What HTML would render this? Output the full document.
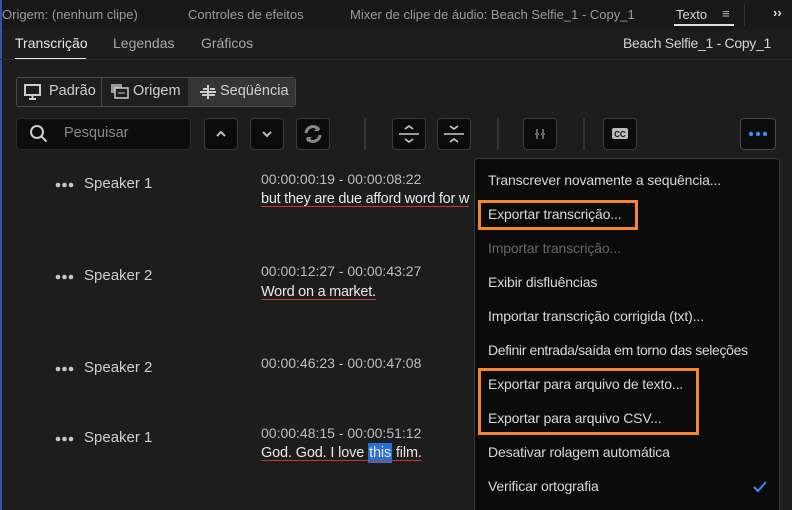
<!DOCTYPE html>
<html><head><meta charset="utf-8"><style>
*{margin:0;padding:0;box-sizing:border-box}
html,body{width:792px;height:510px;overflow:hidden}
body{background:#1d1d1d;font-family:"Liberation Sans",sans-serif;color:#ccc;position:relative}
.a{position:absolute;white-space:nowrap}
.top{left:0;top:0;width:792px;height:30px;background:#181818}
.t1{font-size:13px;color:#9a9a9a;top:7px}
.sub{font-size:14px;top:35px;color:#a8a8a8}
.btn{position:absolute;top:118px;width:34px;height:32px;background:#0c0c0c;border:1px solid #3a3a3a;border-radius:4px}
.sep{position:absolute;top:118px;width:2px;height:32px;background:#333}
.spk{font-size:15px;color:#d0d0d0}
.tc{font-size:14px;color:#bdbdbd}
.tx{font-size:14.5px;color:#e8e8e8;text-decoration:underline;text-decoration-color:#c33;text-underline-offset:3px;letter-spacing:-0.25px}
.menu{left:474px;top:158px;width:306px;height:352px;background:#0b0b0b;border:1px solid #3a3a3a;border-bottom:none;border-radius:4px 4px 0 0}
.mi{left:488px;font-size:14px;color:#d8d8d8;letter-spacing:-0.15px}
.ob{position:absolute;border:3px solid #f5862b}
</style></head><body>
<div class="a top"></div>
<div class="a" style="left:0;top:0;width:2px;height:510px;background:#2a5aa8"></div>
<div class="a t1" style="left:2px">Origem: (nenhum clipe)</div>
<div class="a t1" style="left:188px">Controles de efeitos</div>
<div class="a t1" style="left:350px">Mixer de clipe de áudio: Beach Selfie_1 - Copy_1</div>
<div class="a t1" style="left:676px;color:#d8d8d8">Texto</div>
<div class="a" style="left:674px;top:24px;width:60px;height:2px;background:#ddd"></div>
<div class="a t1" style="left:722px;top:6px;color:#bbb">≡</div>
<div class="a" style="left:744px;top:4px;width:1px;height:22px;background:#333"></div>
<div class="a t1" style="left:773px;top:5px;color:#ddd;font-weight:bold">››</div>
<div class="a sub" style="left:15px;color:#e6e6e6">Transcrição</div>
<div class="a" style="left:15px;top:58px;width:71px;height:2px;background:#e6e6e6"></div>
<div class="a sub" style="left:113px">Legendas</div>
<div class="a sub" style="left:201px">Gráficos</div>
<div class="a sub" style="left:623px;color:#d4d4d4;letter-spacing:-0.3px">Beach Selfie_1 - Copy_1</div>
<div class="a" style="left:0;top:59px;width:792px;height:1px;background:#2c2c2c"></div>
<div class="a" style="left:16px;top:77px;width:280px;height:30px;border:1px solid #4a4a4a;border-radius:3px;background:#1e1e1e"></div>
<div class="a" style="left:188px;top:78px;width:107px;height:28px;background:#353535"></div>
<div class="a" style="left:101px;top:78px;width:1px;height:28px;background:#4a4a4a"></div>
<svg class="a" style="left:24px;top:84px" width="17" height="16"><rect x="1" y="1" width="15" height="10" fill="none" stroke="#ccc" stroke-width="2"/><path d="M8.5 11v3M5 15h7" stroke="#ccc" stroke-width="2"/></svg>
<div class="a" style="left:49px;top:83px;font-size:14.5px;color:#d0d0d0">Padrão</div>
<svg class="a" style="left:110px;top:83px" width="19" height="17"><rect x="1" y="1" width="11" height="9" fill="#999"/><rect x="5" y="5" width="13" height="10" fill="#1e1e1e" stroke="#ccc" stroke-width="1.5"/><path d="M8 10h7" stroke="#ccc"/></svg>
<div class="a" style="left:133px;top:83px;font-size:14.5px;color:#d0d0d0">Origem</div>
<svg class="a" style="left:199px;top:83px" width="18" height="17"><path d="M1 9h16M9 2v14M4 6h5M10 12h6M3 12h5M11 6h5" stroke="#ccc" stroke-width="2"/></svg>
<div class="a" style="left:220px;top:83px;font-size:14.5px;color:#d0d0d0">Seqüência</div>
<div class="a" style="left:16px;top:118px;width:175px;height:32px;background:#0d0d0d;border:1px solid #2a2a2a;border-radius:4px"></div>
<svg class="a" style="left:29px;top:124px" width="20" height="20"><circle cx="8" cy="8" r="6" fill="none" stroke="#ccc" stroke-width="2"/><path d="M12.5 12.5l5 5" stroke="#ccc" stroke-width="2"/></svg>
<div class="a" style="left:64px;top:125px;font-size:14.5px;color:#8a8a8a">Pesquisar</div>
<div class="btn" style="left:204px"><svg width="32" height="30"><path d="M12 17l4-4 4 4" fill="none" stroke="#bbb" stroke-width="2"/></svg></div>
<div class="btn" style="left:250px"><svg width="32" height="30"><path d="M12 13l4 4 4-4" fill="none" stroke="#bbb" stroke-width="2"/></svg></div>
<div class="btn" style="left:296px"><svg width="32" height="30"><path d="M9 14a7 7 0 0 1 13-3M23 16a7 7 0 0 1-13 3" fill="none" stroke="#888" stroke-width="3"/><path d="M22 7v5h-5M10 23v-5h5" fill="#888"/></svg></div>
<div class="sep" style="left:364px"></div>
<div class="btn" style="left:392px"><svg width="32" height="30"><path d="M12 10l4-3 4 3M6 15h20M12 20l4 3 4-3" fill="none" stroke="#ccc" stroke-width="1.6"/></svg></div>
<div class="btn" style="left:437px"><svg width="32" height="30"><path d="M12 7l4 3 4-3M6 15h20M12 23l4-3 4 3" fill="none" stroke="#ccc" stroke-width="1.6"/></svg></div>
<div class="sep" style="left:497px"></div>
<div class="btn" style="left:523px"><svg width="32" height="30"><path d="M13 10v10M19 10v10M11 15h4M17 15h4" stroke="#666" stroke-width="2"/></svg></div>
<div class="sep" style="left:583px"></div>
<div class="btn" style="left:603px"><svg width="32" height="30"><rect x="8" y="9" width="16" height="11" rx="2" fill="#bbb"/><text x="16" y="18" font-size="8" font-weight="bold" text-anchor="middle" fill="#111" font-family="Liberation Sans">CC</text></svg></div>
<div class="btn" style="left:740px;width:36px;border-color:#4a4a4a"><svg width="34" height="30"><circle cx="10" cy="15" r="2.2" fill="#3b8ef0"/><circle cx="17" cy="15" r="2.2" fill="#3b8ef0"/><circle cx="24" cy="15" r="2.2" fill="#3b8ef0"/></svg></div>
<svg class="a" style="left:55px;top:181px" width="20" height="8"><circle cx="3" cy="4" r="2.3" fill="#c8c8c8"/><circle cx="9.5" cy="4" r="2.3" fill="#c8c8c8"/><circle cx="16" cy="4" r="2.3" fill="#c8c8c8"/></svg>
<div class="a spk" style="left:84px;top:175px">Speaker 1</div>
<div class="a tc" style="left:261px;top:171px">00:00:00:19 - 00:00:08:22</div>
<div class="a tx" style="left:261px;top:191px">but they are due afford word for w</div>
<svg class="a" style="left:55px;top:273px" width="20" height="8"><circle cx="3" cy="4" r="2.3" fill="#c8c8c8"/><circle cx="9.5" cy="4" r="2.3" fill="#c8c8c8"/><circle cx="16" cy="4" r="2.3" fill="#c8c8c8"/></svg>
<div class="a spk" style="left:84px;top:267px">Speaker 2</div>
<div class="a tc" style="left:261px;top:263px">00:00:12:27 - 00:00:43:27</div>
<div class="a tx" style="left:261px;top:284px">Word on a market.</div>
<svg class="a" style="left:55px;top:365px" width="20" height="8"><circle cx="3" cy="4" r="2.3" fill="#c8c8c8"/><circle cx="9.5" cy="4" r="2.3" fill="#c8c8c8"/><circle cx="16" cy="4" r="2.3" fill="#c8c8c8"/></svg>
<div class="a spk" style="left:84px;top:359px">Speaker 2</div>
<div class="a tc" style="left:261px;top:355px">00:00:46:23 - 00:00:47:08</div>
<svg class="a" style="left:55px;top:435px" width="20" height="8"><circle cx="3" cy="4" r="2.3" fill="#c8c8c8"/><circle cx="9.5" cy="4" r="2.3" fill="#c8c8c8"/><circle cx="16" cy="4" r="2.3" fill="#c8c8c8"/></svg>
<div class="a spk" style="left:84px;top:429px">Speaker 1</div>
<div class="a tc" style="left:261px;top:425px">00:00:48:15 - 00:00:51:12</div>
<div class="a tx" style="left:261px;top:445px;letter-spacing:-0.15px">God. God. I love <span style="background:#2a70d0;padding:2px 1px">this</span> film.</div>
<div class="a menu"></div>
<div class="a mi" style="top:172px">Transcrever novamente a sequência...</div>
<div class="a mi" style="top:206px">Exportar transcrição...</div>
<div class="a mi" style="top:240px;color:#666">Importar transcrição...</div>
<div class="a mi" style="top:274px">Exibir disfluências</div>
<div class="a mi" style="top:308px">Importar transcrição corrigida (txt)...</div>
<div class="a mi" style="top:342px;letter-spacing:-0.35px">Definir entrada/saída em torno das seleções</div>
<div class="a mi" style="top:376px">Exportar para arquivo de texto...</div>
<div class="a mi" style="top:410px">Exportar para arquivo CSV...</div>
<div class="a mi" style="top:444px">Desativar rolagem automática</div>
<div class="a mi" style="top:478px">Verificar ortografia</div>
<svg class="a" style="left:752px;top:480px" width="16" height="14"><path d="M2 7l4 4 8-9" fill="none" stroke="#3b8ef0" stroke-width="2"/></svg>
<div class="ob" style="left:478px;top:200px;width:160px;height:30px"></div>
<div class="ob" style="left:478px;top:368px;width:221px;height:67px"></div>
</body></html>
